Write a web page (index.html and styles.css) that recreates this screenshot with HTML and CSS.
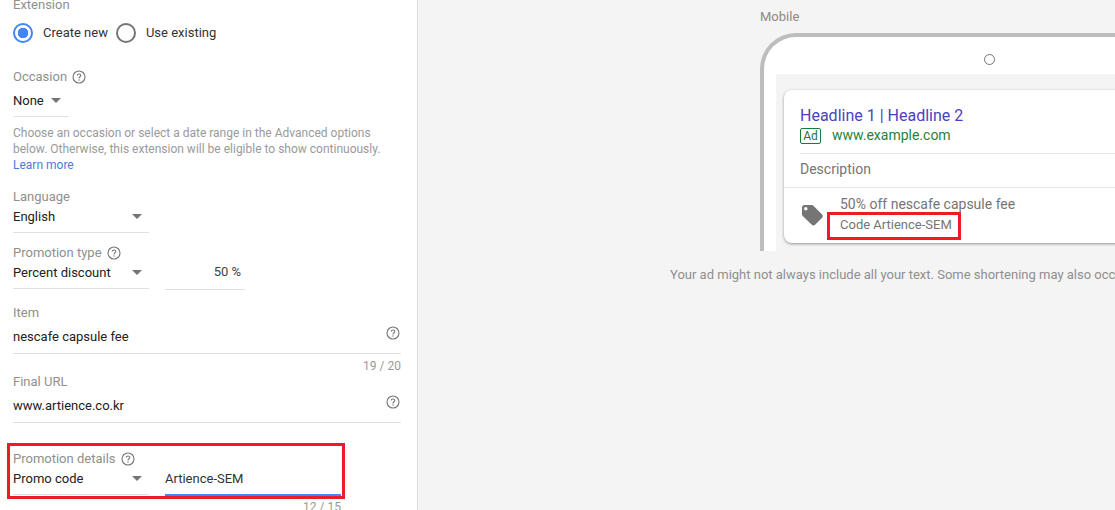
FILE: index.html
```html
<!DOCTYPE html>
<html lang="en">
<head>
<meta charset="utf-8">
<title>Promotion extension</title>
<link rel="stylesheet" href="styles.css">
</head>
<body>
<div class="page">
  <section class="form">
    <div class="label label-top">Extension</div>
    <div class="radios">
      <span class="radio radio-on"></span><span class="radio-text">Create new</span>
      <span class="radio"></span><span class="radio-text">Use existing</span>
    </div>
    <div class="label label-occasion">Occasion <svg class="help" viewBox="0 0 14 14"><use href="#q"/></svg></div>
    <div class="select select-none"><span class="select-value">None</span><span class="caret"></span></div>
    <p class="hint">Choose an occasion or select a date range in the Advanced options below. Otherwise, this extension will be eligible to show continuously. <a class="link">Learn more</a></p>
    <div class="label label-language">Language</div>
    <div class="select select-wide"><span class="select-value">English</span><span class="caret"></span></div>
    <div class="label label-type">Promotion type <svg class="help" viewBox="0 0 14 14"><use href="#q"/></svg></div>
    <div class="row">
      <div class="select select-wide"><span class="select-value">Percent discount</span><span class="caret"></span></div>
      <div class="percent">50 %</div>
    </div>
    <div class="label label-item">Item</div>
    <div class="field"><span>nescafe capsule fee</span><svg class="help" viewBox="0 0 14 14"><use href="#q"/></svg></div>
    <div class="count">19 / 20</div>
    <div class="label label-url">Final URL</div>
    <div class="field"><span>www.artience.co.kr</span><svg class="help" viewBox="0 0 14 14"><use href="#q"/></svg></div>
    <div class="label label-details">Promotion details <svg class="help" viewBox="0 0 14 14"><use href="#q"/></svg></div>
    <div class="row">
      <div class="select select-wide select-promo"><span class="select-value">Promo code</span><span class="caret"></span></div>
      <div class="code">Artience-SEM</div>
    </div>
    <div class="count count-code">12 / 15</div>
    <div class="mark mark-form"></div>
  </section>
  <section class="preview">
    <div class="preview-title">Mobile</div>
    <div class="phone">
      <div class="camera-row"><span class="camera"></span></div>
      <div class="screen">
        <div class="card">
          <div class="headline">Headline 1 | Headline 2</div>
          <div class="url-row"><span class="ad">Ad</span><span class="url">www.example.com</span></div>
          <div class="desc">Description</div>
          <div class="promo">
            <svg class="tag" viewBox="0 0 22 22"><path d="M1 3.5C1 2.1 2.1 1 3.5 1h7.2c.6 0 1.2.2 1.7.7l8.7 8.7c.9.9.9 2.4 0 3.300l-7 7c-.9.9-2.400.9-3.300 0L1.700 11.900C1.200 11.400 1 10.800 1 10.200Z" fill="#757575"/><circle cx="4.800" cy="4.800" r="1.700" fill="#fff"/></svg>
            <div class="promo-text">
              <div class="promo-line">50% off nescafe capsule fee</div>
              <div class="promo-code">Code Artience-SEM</div>
            </div>
          </div>
        </div>
      </div>
      <div class="mark mark-card"></div>
    </div>
    <p class="note">Your ad might not always include all your text. Some shortening may also occur in some formats.</p>
  </section>
</div>
<svg class="defs" width="0" height="0">
  <symbol id="q" viewBox="0 0 14 14">
    <circle cx="7" cy="7" r="6" fill="none" stroke="#757575" stroke-width="1.100"/>
    <path d="M5.200 5.600C5.200 4.600 6 4 7 4s1.800.6 1.800 1.500c0 1.300-1.800 1.300-1.800 2.900" fill="none" stroke="#757575" stroke-width="1.100"/>
    <circle cx="7" cy="10" r=".7" fill="#757575"/>
  </symbol>
</svg>
</body>
</html>
```
FILE: styles.css
```css
* { box-sizing: border-box; }
html, body { margin: 0; height: 510px; overflow: hidden; }
body { font-family: Roboto, "Liberation Sans", sans-serif; font-size: 13px; color: #212121; background: #fff; }
.page { display: flex; width: 1115px; height: 510px; overflow: hidden; }
.defs { position: absolute; }

.form { position: relative; flex: 0 0 418px; height: 510px; padding-left: 13px; background: #fff; border-right: 1px solid #dcdcdc; overflow: hidden; }
.label { display: flex; align-items: center; gap: 5px; height: 16px; line-height: 16px; font-size: 13px; color: #8f8f8f; }
.label-top { margin-top: -3px; }
.label-occasion { margin-top: 25px; }
.label-language { margin-top: 16px; }
.label-type { margin-top: 12px; }
.label-item { margin-top: 15px; }
.label-url { margin-top: 0; }
.label-details { margin-top: 28px; }
.help { width: 14px; height: 14px; flex: none; }

.radios { display: flex; align-items: center; height: 22px; margin-top: 9px; }
.radio { width: 20px; height: 20px; border-radius: 50%; border: 2px solid #757575; flex: none; }
.radio-on { border-color: #4285f4; background: radial-gradient(circle, #4285f4 0 5px, #fff 5.500px); }
.radio-text { margin-left: 10px; margin-right: 8px; line-height: 18px; color: #333; }

.select { display: flex; align-items: center; border-bottom: 1px solid #e0e0e0; }
.select-value { flex: 1; }
.select-none { width: 55px; height: 32px; padding-bottom: 1px; }
.select-none .select-value { flex: none; }
.select-wide { width: 136px; height: 28px; padding-bottom: 5px; }
.caret { width: 0; height: 0; margin-right: 7px; border-left: 5px solid transparent; border-right: 5px solid transparent; border-top: 5px solid #757575; }
.select-none .caret { margin: 0 0 0 7px; }

.hint { width: 380px; margin: 8px 0 0; font-size: 12px; line-height: 16px; color: #9a9a9a; }
.link { color: #4a7bdc; }

.row { display: flex; gap: 16px; }
.percent { width: 80px; height: 29px; padding-right: 4px; text-align: right; line-height: 22px; border-bottom: 1px solid #e0e0e0; color: #424242; }

.field { display: flex; justify-content: space-between; align-items: center; width: 388px; height: 33px; padding: 0 1px 2px 0; border-bottom: 1px solid #e0e0e0; }
.field .help { margin-bottom: 6px; }
.count { width: 388px; margin-top: 4px; text-align: right; font-size: 12px; line-height: 16px; color: #9a9a9a; }

.select-promo { height: 28px; padding-bottom: 5px; }
.code { width: 176px; height: 30px; line-height: 24px; border-bottom: 3px solid #4285f4; color: #333; }
.count-code { width: 328px; margin-top: 2px; }

.mark { position: absolute; border: 3px solid #ed1c24; pointer-events: none; }
.mark-form { left: 7px; top: 443px; width: 338px; height: 56px; }

.preview { flex: 1; min-width: 0; height: 510px; background: #f4f4f4; overflow: hidden; }
.preview-title { height: 16px; margin: 9px 0 0 342px; line-height: 16px; font-size: 13px; color: #8a8a8a; }
.phone { position: relative; width: 520px; height: 218px; margin: 8px 0 0 342px; border: 4px solid #bdbdbd; border-bottom: 0; border-radius: 36px 0 0 0; background: #fff; padding: 37px 0 0 12px; }
.camera-row { position: absolute; left: 220px; top: 17px; }
.camera { display: block; width: 11px; height: 11px; border: 1px solid #757575; border-radius: 50%; }
.screen { height: 177px; padding: 16px 0 0 8px; background: #f4f4f4; }
.card { width: 560px; height: 153px; background: #fff; border-radius: 8px; box-shadow: 0 1px 3px rgba(0,0,0,.4); padding-top: 15px; }
.headline { margin-left: 16px; font-size: 16px; line-height: 22px; color: #4b3fbd; }
.url-row { display: flex; align-items: center; margin: 1px 0 0 16px; height: 16px; }
.ad { width: 21px; height: 16px; line-height: 14px; text-align: center; font-size: 12px; border: 1px solid #1b7a3d; border-radius: 2px; color: #1b7a3d; }
.url { margin: 0 0 2px 11px; font-size: 14px; color: #1f8240; }
.desc { height: 34px; margin: 9px 0 0 16px; border-top: 1px solid #e8e8e8; font-size: 14px; line-height: 31px; color: #757575; }
.promo { display: flex; height: 56px; border-top: 1px solid #e8e8e8; }
.tag { width: 22px; height: 22px; margin: 16px 0 0 17px; flex: none; }
.promo-text { margin-left: 17px; padding-top: 6px; }
.promo-line { font-size: 14px; line-height: 20px; color: #757575; }
.promo-code { font-size: 13px; line-height: 20px; margin-top: 1px; color: #757575; }
.mark-card { left: 63px; top: 175px; width: 134px; height: 28px; }
.note { margin: 16px 0 0 252px; width: 700px; font-size: 13px; line-height: 16px; color: #8f8f8f; white-space: nowrap; }
```
